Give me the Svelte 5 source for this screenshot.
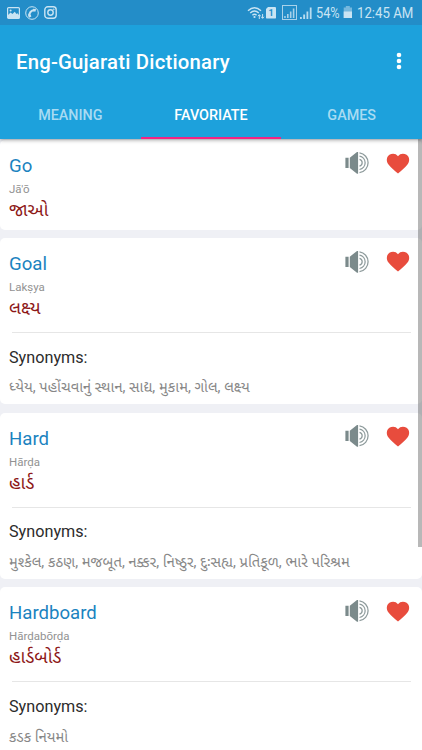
<script>
  const entries = [
    { word: 'Go', latin: 'Jā\'ō', meaning: 'જાઓ' },
    { word: 'Goal', latin: 'Lakṣya', meaning: 'લક્ષ્ય', synonyms: 'ધ્યેય, પહોંચવાનું સ્થાન, સાદ્ય, મુકામ, ગોલ, લક્ષ્ય' },
    { word: 'Hard', latin: 'Hārḍa', meaning: 'હાર્ડ', synonyms: 'મુશ્કેલ, કઠણ, મજબૂત, નક્કર, નિષ્ઠુર, દુઃસહ્ય, પ્રતિકૂળ, ભારે પરિશ્રમ' },
    { word: 'Hardboard', latin: 'Hārḍabōrḍa', meaning: 'હાર્ડબોર્ડ', synonyms: 'કડક નિયમો' }
  ];
  const tabs = ['MEANING', 'FAVORIATE', 'GAMES'];
  let active = $state('FAVORIATE');
</script>

<div class="screen">
  <header>
    <div class="status">
      <div class="notifications">
        <svg width="13" height="12" viewBox="0 0 13 12"><rect x=".6" y=".6" width="11.8" height="10.8" rx="1" fill="none" stroke="currentColor" stroke-width="1.2"/><path d="M1 11V8l2.6-2.4L5.4 7l2.4-2.2L9.4 7l1-.8L12 8v3z" fill="currentColor"/><circle cx="3.6" cy="3.4" r="1" fill="currentColor"/></svg>
        <svg width="14" height="14" viewBox="0 0 14 14"><circle cx="7" cy="7" r="6.3" fill="none" stroke="currentColor"/><path d="M4.2 10.5C4.1 7.2 6 4.5 9.6 4" fill="none" stroke="currentColor" stroke-width="1.8"/><path d="M8 2.8l3 .1-.4 2.5-2.3.2zM3 8.2l2.6.2.8 2.2-2.3 1.2z" fill="currentColor"/></svg>
        <svg width="13" height="13" viewBox="0 0 13 13" fill="none" stroke="currentColor"><rect x=".8" y=".8" width="11.4" height="11.4" rx="3" stroke-width="1.4"/><circle cx="6.5" cy="6.5" r="2.7" stroke-width="1.4"/><circle cx="9.8" cy="3.2" r=".5" fill="currentColor" stroke-width=".5"/></svg>
      </div>
      <div class="system">
        <svg class="wifi" width="18" height="14" viewBox="0 0 18 14" fill="none" stroke="currentColor"><path d="M1 4.8Q7.5-1.2 14 4.8M3.2 7.1Q7.5 3 11.8 7.1M5.4 9.3Q7.5 7.4 9.6 9.3" stroke-width="1.4"/><circle cx="7.5" cy="11" r="1.1" fill="currentColor" stroke="none"/><path d="M12.3 13V8.8M10.9 10.2l1.4-1.5 1.4 1.5M15.6 8v4.2M14.2 10.8l1.4 1.5 1.4-1.5"/></svg>
        <span class="sim">1</span>
        <svg class="boxed" width="15" height="15" viewBox="0 0 15 15"><rect x=".5" y=".5" width="14" height="14" fill="none" stroke="currentColor" opacity=".8"/><path d="M2.2 11h1.5v2H2.2zM5 9h1.6v4H5zM7.9 6.5h1.6V13H7.9zM10.8 3.5h1.6V13h-1.6z" fill="currentColor" opacity=".8"/></svg>
        <svg class="signal" width="12" height="12" viewBox="0 0 12 12"><path d="M0 10h1.8v2H0zM3.2 7.5h1.9V12H3.2zM6.5 4.5h1.8V12H6.5zM9.8.5h1.8V12H9.8z" fill="currentColor" opacity=".9"/></svg>
        <span class="percent">54%</span>
        <svg class="battery" width="10" height="13" viewBox="0 0 10 13"><path d="M2.8 0h4v1.5H9V12H.7V1.5h2.1z" fill="currentColor" opacity=".5"/><path d="M.7 5.5H9V12H.7z" fill="currentColor"/></svg>
        <span class="clock">12:45 AM</span>
      </div>
    </div>
    <div class="toolbar">
      <h1>Eng-Gujarati Dictionary</h1>
      <button class="more" aria-label="More options">
        <svg width="6" height="18" viewBox="0 0 6 18" fill="#fff"><circle cx="3" cy="3" r="2.3"/><circle cx="3" cy="9" r="2.3"/><circle cx="3" cy="15" r="2.3"/></svg>
      </button>
    </div>
    <nav>
      {#each tabs as tab}
        <button class:active={active === tab} onclick={() => (active = tab)}>{tab}</button>
      {/each}
    </nav>
  </header>

  <main>
    {#each entries as entry}
      <article>
        <div class="summary">
          <div class="names">
            <div class="word">{entry.word}</div>
            <div class="latin">{entry.latin}</div>
            <div class="meaning">{entry.meaning}</div>
          </div>
          <div class="actions">
            <svg width="24" height="24" viewBox="0 0 24 24"><path d="M.4 6.7h3.2v10.2H.4zM4.8 6.7 12 .9h1.1v21.8H12l-7.2-5.8z" fill="#7b8a8b"/><g fill="none" stroke="#8e9b9c" stroke-width="1.25"><path d="M14.5 8.4a3.5 3.5 0 0 1 0 6.8M14.5 5.1a6.8 6.8 0 0 1 0 13.4M14.5 1.9a10 10 0 0 1 0 19.8"/></g></svg>
            <svg width="24" height="22" viewBox="0 0 24 22"><path d="M12 3.2C14.1.3 17.8 0 20.6 1.8c3.2 2.2 3.4 6.9.7 10C19 14.8 15.1 18 12 20.4 8.9 18 5 14.8 2.7 11.8 0 8.7.2 4 3.4 1.8 6.2 0 9.9.3 12 3.2z" fill="#e84c3d"/></svg>
          </div>
        </div>
        {#if entry.synonyms}
          <div class="synonyms">
            <div class="label">Synonyms:</div>
            <div class="list">{entry.synonyms}</div>
          </div>
        {/if}
      </article>
    {/each}
    <div class="scrollbar"></div>
  </main>
</div>

<style>
  :global(body) { margin: 0; background: #eff0f5; }
  .screen {
    width: 422px; height: 750px; overflow: hidden;
    display: flex; flex-direction: column;
    font-family: Roboto, "Noto Sans", "Noto Sans Gujarati", sans-serif;
    background: #eff0f5;
  }
  header { position: relative; z-index: 2; height: 139px; flex: none; background: #1da1dc; box-shadow: 0 1px 4px rgba(0, 0, 0, .38); }
  button { border: 0; padding: 0; background: none; font: inherit; }
  svg { display: block; flex: none; }
  .status { height: 25px; background: #238dc8; color: #c9e4f3; display: flex; justify-content: space-between; box-sizing: border-box; padding: 0 8px 0 7px; }
  .notifications { display: flex; align-items: center; gap: 5px; }
  .system { display: flex; align-items: center; font-size: 14.3px; }
  .wifi { margin-right: 1px; }
  .sim { width: 10px; height: 12px; border-radius: 1px; clip-path: polygon(25% 0, 100% 0, 100% 100%, 0 100%, 0 20%); background: #c9e4f3; color: #238dc8; font-size: 9px; line-height: 13px; font-weight: 700; text-align: center; margin-right: 6px; }
  .boxed { margin-right: 3px; }
  .signal { margin-right: 4px; }
  .percent, .clock { white-space: nowrap; line-height: 25px; padding-top: 1px; }
  .percent { width: 24px; transform: scaleX(.89); transform-origin: left; }
  .battery { margin: 0 4px 0 3px; }
  .clock { width: 57px; transform: scaleX(.925); transform-origin: left; }
  .toolbar { height: 67px; display: flex; align-items: center; justify-content: space-between; padding: 3px 20px 1px 16px; box-sizing: content-box; }
  h1 { margin: 0; color: #fff; font-size: 20.3px; letter-spacing: .22px; font-weight: 500; line-height: 28px; }
  .more { width: 6px; height: 18px; position: relative; top: -1px; }
  nav { display: flex; height: 43px; }
  nav button { flex: 1; box-sizing: border-box; padding-bottom: 2px; border-bottom: 2px solid transparent; color: #a8dbf2; font-size: 14.35px; font-weight: 500; }
  nav button.active { color: #fff; border-bottom-color: #f52283; }
  main { position: relative; flex: 1; display: flex; flex-direction: column; gap: 8.3px; padding-top: .6px; }
  article { background: #fff; border-radius: 5px; flex: none; }
  .summary { height: 90.2px; display: flex; justify-content: space-between; box-sizing: border-box; padding: 13px 12px 0 9px; }
  .names { white-space: nowrap; }
  .word { color: #1b83bf; font-size: 18.6px; line-height: 26px; }
  .latin { color: #929292; font-size: 11.5px; line-height: 20px; }
  .meaning { color: #8d1717; font-size: 18.3px; line-height: 22px; }
  .actions { display: flex; gap: 17px; margin-top: -1.4px; }
  .actions svg:last-child { margin-top: 1.7px; }
  .synonyms { height: 76.2px; padding: 3.8px 9px 0; box-sizing: border-box; }
  .synonyms::before { content: ""; display: block; height: 1px; margin: 0 2px 0 3px; background: #e6e6e6; }
  .label { margin-top: 11.5px; color: #2b2b2b; font-size: 16.2px; line-height: 26px; }
  .list { color: #878787; font-size: 14.75px; line-height: 22px; margin-top: 5.7px; white-space: nowrap; }
  .scrollbar { position: absolute; right: 0; top: 0; width: 4px; height: 408px; background: rgba(100, 100, 100, .46); }
</style>
